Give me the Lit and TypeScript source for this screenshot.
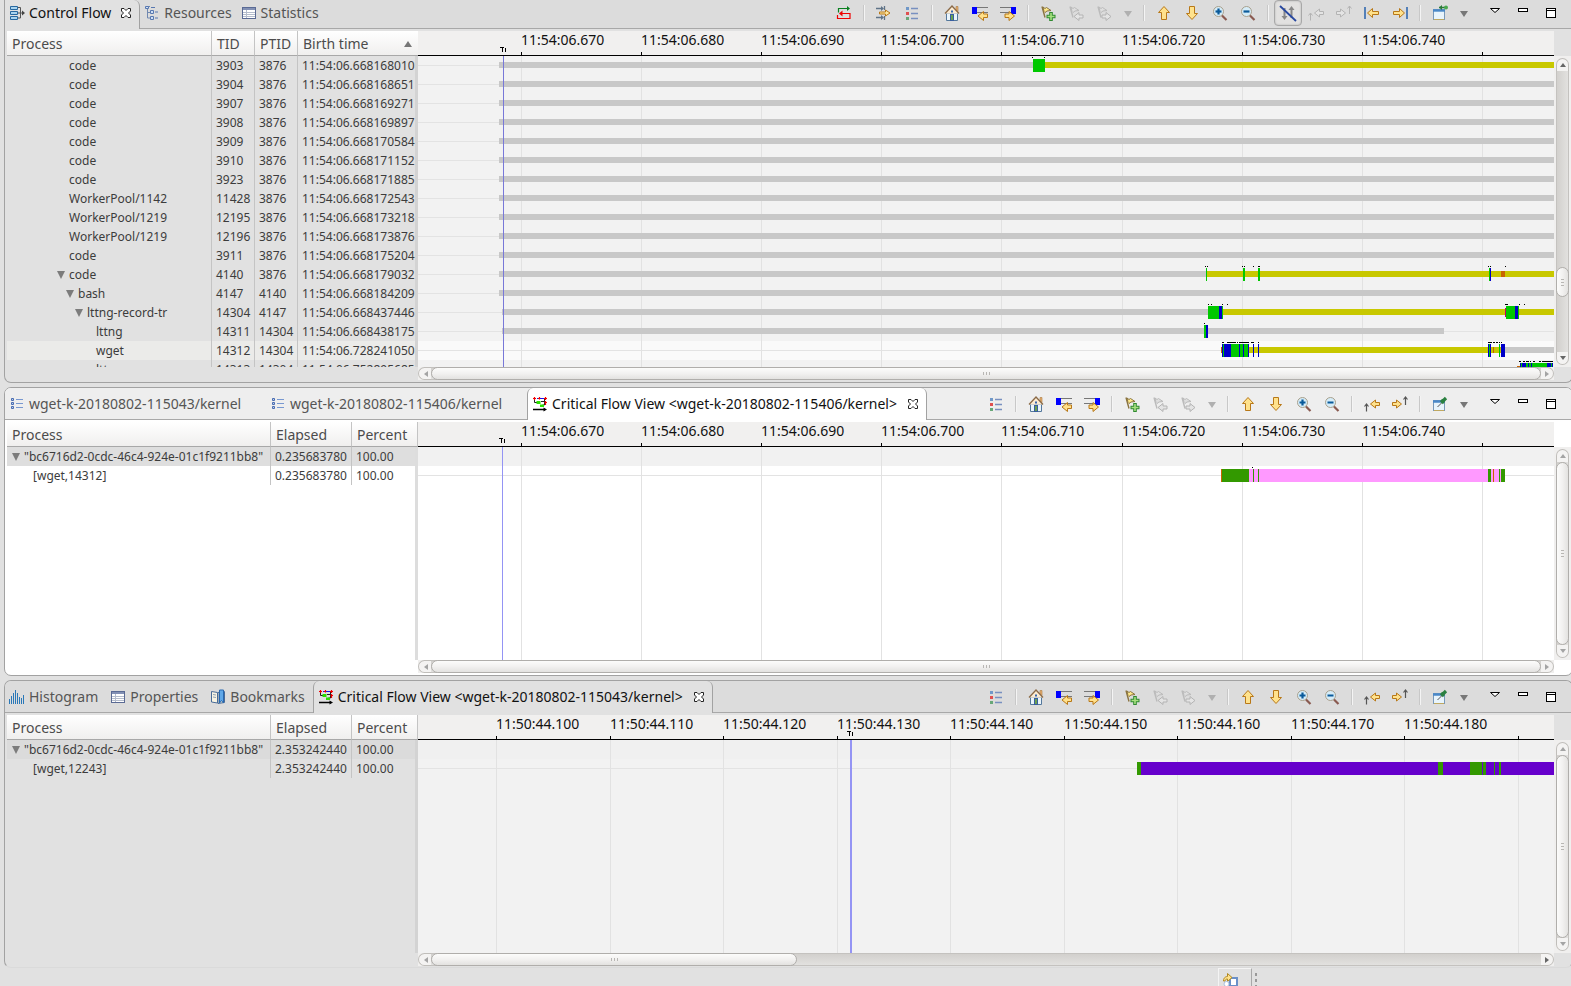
import { LitElement, html, css, svg, nothing, TemplateResult, SVGTemplateResult } from "lit";
import { customElement } from "lit/decorators.js";
import { classMap } from "lit/directives/class-map.js";

type Seg = [number, number, string];
interface Row { level: number; open?: boolean; cells: string[]; selected?: boolean; segs?: Seg[]; dots?: [number, number][] }
interface Tab { icon: string; label: string; active?: boolean; size: string }
interface View {
  name: string; tone: string; tabs: Tab[]; tools: string[]; columns: string[]; sorted?: boolean;
  rows: Row[]; ticks: [number, string][]; cursor: number; thumb: [number, number]; vthumb: [number, number];
}

/* Visible range shared by every time axis. */
const START = 418;
const END = 1554;
const pct = (v: number) => `${((v - START) / (END - START)) * 100}%`;
const wid = (a: number, b: number) => `${((b - a) / (END - START)) * 100}%`;

const arrowR = (c: string, f: string) => svg`<path d="M1.5 6.5h6v-3l5 4.5-5 4.500v-3h-6z" fill=${f} stroke=${c}/>`;
const arrowL = (c: string, f: string) => svg`<path d="M14.500 6.500h-6v-3l-5 4.500 5 4.500v-3h6z" fill=${f} stroke=${c}/>`;
const lens = svg`<path d="M10 10.500l4.500 4.500" stroke="#8a5a50" stroke-width="2.200"/><circle cx="6.500" cy="6.500" r="5" fill="#d5ecf8" stroke="#a9a08c"/><path d="M3.500 6.500h6" stroke="#0a5a9a" stroke-width="2.200"/>`;
const flag = (c: string, f: string) => svg`<path d="M2 1.500l3 11" stroke=${c} stroke-width="1.400"/><path d="M3 2l2 1.500 1.500-1 4.500 3-4 .5-2 1.500-1-1z" fill=${f} stroke=${c}/>`;
const critical = svg`<path d="M5 2.500h8" stroke="#1414f0" stroke-width="1.200"/><path d="M2.500 4v2.500h3M9 5.500h4M12.500 3v6h-2" stroke="#222" fill="none"/><path d="M1 2.500h3M2.500 1v3M6 2.500h2M7.500 1v2.500M12 2.500h3M13.500 1v3M13.500 5v4M12.500 6.500h2.500" stroke="#f00000" stroke-width="1.200"/><path d="M4.500 5h4v3h-4zM8 8.500h4v2.500h-4z" fill="#2be000"/><path d="M1 13.500h12" stroke="#000" stroke-width="1.300"/><path d="M11.500 11.500l3.500 2-3.500 2z" fill="#000"/>`;
const grid = svg`<rect x="1.500" y="2.500" width="13" height="11" fill="#fff" stroke="#5a6a94"/><path d="M2 4h12" stroke="#8290b4" stroke-width="2"/><path d="M2 7.500h12M2 9.500h12M2 11.500h12M5.500 5v8" stroke="#b4bccc"/>`;
const house = svg`<path d="M12 1.500h2v5h-2z" fill="#e8b070" stroke="#a87840" stroke-width=".6"/><path d="M2.500 8h11v7.500h-11z" fill="#eaf4fb" stroke="#54789c"/><path d="M1 8.500L8 1l7 7.500" fill="#fbead0" stroke="#8a6a48" stroke-width="1.300"/><rect x="6.500" y="9.500" width="3" height="6" fill="#6aa050" stroke="#385ea0"/><path d="M7 6.500h2" stroke="#3868b0" stroke-width="2"/>`;
const pinWin = svg`<rect x="1.500" y="4.500" width="11" height="10" fill="#e8f4fc" stroke="#7898b8"/><path d="M1 5.500h12" stroke="#4a88c8" stroke-width="2.400"/><path d="M2 14.500h10" stroke="#c0a860"/>`;

const ICONS: Record<string, SVGTemplateResult> = {
  flow: svg`<path d="M1.500 1.500h7v3h-7zM1.500 6.500h7v3h-7zM1.500 11.500h7v3h-7z" fill="#a8d4f0" stroke="#2868a0"/><path d="M9 2.500h2.500v10.500h-2.500M9 8h5" stroke="#555" fill="none"/><path d="M13 5.500l3 2.500-3 2.500z" fill="#444"/>`,
  tree: svg`<path d="M2 1.500h4M3.500 2v11h3M3.500 7.500h3" stroke="#7088b0" fill="none"/><path d="M1.500 1.500h3v2h-3zM6.500 5.500h3v3h-3zM6.500 11.500h3v3h-3z" fill="#cfe0f4" stroke="#5878b0"/><path d="M7 2.500h4M11 7h3M11 13h3" stroke="#5878b0"/>`,
  grid,
  events: svg`<path d="M2.500 2.500h2v2h-2zM2.500 6.500h2v2h-2zM2.500 10.500h2v2h-2z" fill="#bcd0ec" stroke="#4a6cb0"/><path d="M7 3.500h7M7 7.500h7M7 11.500h7" stroke="#7898d0"/>`,
  critical,
  histogram: svg`<path d="M.5 15v-5M2.500 15v-8M4.500 15v-11M6.500 15v-14M8.500 15v-11M10.500 15v-7M12.500 15v-6M14.500 15v-9" stroke="#2a78b8" stroke-width="1"/>`,
  book: svg`<path d="M1.500 2.500l6 1v10.500l-6-1z" fill="#f8f4e4" stroke="#4a6c98"/><path d="M8 3.500l6.500-1v11l-6.500 1z" fill="#f0ecd8" stroke="#4a6c98"/><path d="M9.500 1h4v13l-2-2.500-2 2.500z" fill="#60a8e8" stroke="#2868b0"/><path d="M3 5.500l3 .5M3 8l3 .5" stroke="#90a0b0"/>`,
  link: svg`<path d="M2.500 7.500v-4h9" stroke="#0a8020" fill="none" stroke-width="1.200"/><path d="M11 1l3 2.500-3 2.500z" fill="#0a8020"/><path d="M5 8.500h9M14 8v5.500h-12.500v-3.500" stroke="#f00000" fill="none" stroke-width="1.200"/><path d="M6.500 5.500v6l-3.500-3z" fill="#f00000"/>`,
  align: svg`<path d="M0 3.500h6M0 12.500h6M8.500 1v4M8.500 11v4" stroke="#607488" stroke-width="1.300"/><path d="M5 1l3 2.500L5 6zM5 10l3 2.500L5 15z" fill="#607488"/><path d="M3.500 7h6v-2l4.500 3-4.500 3v-2h-6z" fill="#ffe9a0" stroke="#b87818"/>`,
  legend: svg`<rect x="2" y="2" width="3" height="3" fill="#7098c8"/><rect x="2" y="7" width="3" height="3" fill="#e05050"/><rect x="2" y="12" width="3" height="3" fill="#68a878"/><path d="M7 3.500h7M7 8.500h7M7 13.500h7" stroke="#7890c0" stroke-width="1.300"/>`,
  home: house,
  prev: svg`<path d="M4 2.500h12M4 7.500h12" stroke="#777"/><rect x="0" y="2" width="5" height="7" fill="#00f"/><path d="M15.500 9h-4v-2.500l-5.500 4.500 5.500 4.500v-3h4z" fill="#ffe08a" stroke="#b87818"/>`,
  next: svg`<path d="M0 2.500h12M0 7.500h12" stroke="#777"/><rect x="11" y="2" width="5" height="7" fill="#00f"/><path d="M5 9h4v-2.500l5.500 4.500-5.500 4.500v-3h-4z" fill="#ffe08a" stroke="#b87818"/>`,
  flagadd: svg`${flag("#8a7440", "#ffe98a")}<path d="M11 7v9M6.500 11.500h9" stroke="#2f8a30" stroke-width="3.600"/><path d="M11 8v7M7.500 11.500h7" stroke="#a8e080" stroke-width="1.600"/>`,
  flagprev: svg`${flag("#bbb", "#dedede")}<path d="M15 10h-4v-2.500l-5 4 5 4v-2.500h4z" fill="#e4e4e4" stroke="#b4b4b4"/>`,
  flagnext: svg`${flag("#bbb", "#dedede")}<path d="M6 10h4v-2.500l5 4-5 4v-2.500h-4z" fill="#e4e4e4" stroke="#b4b4b4"/>`,
  up: svg`<path d="M8 1.500l5.500 6h-3v7h-5v-7h-3z" fill="#ffe28c" stroke="#b87818"/>`,
  down: svg`<path d="M8 14.500l5.500-6h-3v-7h-5v7h-3z" fill="#ffe28c" stroke="#b87818"/>`,
  zoomin: svg`${lens}<path d="M6.500 3.500v6" stroke="#0a5a9a" stroke-width="2.200"/>`,
  zoomout: lens,
  hide: svg`<path d="M4.500 3v10M11.500 3v10" stroke="#888" stroke-width="2"/><path d="M1.500 11h6l-3 4zM8.500 5h6l-3-4z" fill="#888"/><path d="M0 1l16 15" stroke="#2848a0" stroke-width="1.800"/>`,
  backoff: svg`<path d="M2.500 15.500v-7M0.500 10.500l2-2.500 2 2.500" stroke="#b4b4b4" fill="none"/><path d="M15.500 6.500h-4v-2.500l-5 4 5 4v-2.500h4z" fill="#e4e4e4" stroke="#b4b4b4"/>`,
  fwdoff: svg`<path d="M13.500 9V1M11.500 3.500l2-2.500 2 2.500" stroke="#b4b4b4" fill="none"/><path d="M.5 6.500h4v-2.500l5 4-5 4v-2.500h-4z" fill="#e4e4e4" stroke="#b4b4b4"/>`,
  back: svg`<path d="M2.500 15.500v-7M0.500 10.500l2-2.500 2 2.500" stroke="#555" stroke-width="1.200" fill="none"/><path d="M15.500 6.500h-4v-2.500l-5 4 5 4v-2.500h4z" fill="#ffe28c" stroke="#b87818"/>`,
  fwd: svg`<path d="M13.500 9V1M11.500 3.500l2-2.500 2 2.500" stroke="#555" stroke-width="1.200" fill="none"/><path d="M.5 6.500h4v-2.500l5 4-5 4v-2.500h-4z" fill="#ffe28c" stroke="#b87818"/>`,
  first: svg`<path d="M1 2v12" stroke="#5480b8" stroke-width="2"/>${arrowL("#b87818", "#ffe28c")}`,
  last: svg`<path d="M15 2v12" stroke="#5480b8" stroke-width="2"/>${arrowR("#b87818", "#ffe28c")}`,
  newview: svg`${pinWin}<path d="M7 2.500h8" stroke="#2a7a38" stroke-width="1.500"/><circle cx="14" cy="2.500" r="2" fill="#4aa850"/><path d="M10 0v5l-3-2.500z" fill="#2a7a38"/>`,
  pin: svg`${pinWin}<path d="M5.500 11l5-5" stroke="#555"/><path d="M9 4l3 3M10 6l4-4" stroke="#2a8040" stroke-width="3.200"/>`,
  dropoff: svg`<path d="M4 6h8l-4 6z" fill="#b0b0b0"/>`,
  drop: svg`<path d="M4 6h8l-4 6z" fill="#777"/>`,
  menu: svg`<path d="M3.500 3.500h9l-4.500 4z" fill="#fff" stroke="#000"/>`,
  min: svg`<rect x="3.500" y="3.500" width="9" height="3" fill="#fff" stroke="#000"/>`,
  max: svg`<rect x="3.500" y="3.500" width="9" height="9" fill="#fff" stroke="#000"/><path d="M3 5.500h10" stroke="#000"/>`,
  close: svg`<path d="M3.500 3.500h2.500l2 2 2-2h2.500v2.500l-2 2 2 2v2.500h-2.500l-2-2-2 2h-2.500v-2.500l2-2-2-2z" fill="#fff" stroke="#222"/>`,
  restore: svg`<rect x="8" y="5" width="7" height="8" fill="#fff" stroke="#6a90c8" stroke-width="2"/><path d="M1.500 8c0-4 3-4.500 4-4.500V.5l4.500 4-4.500 4V6c-2 0-2 1-2.500 2z" fill="#ffe28c" stroke="#b08820"/><circle cx="4.500" cy="11" r="2.500" fill="#fff" stroke="#a8c0e0"/>`,
};
const LABELS: Record<string, string> = {
  link: "Optimize", align: "Align views", legend: "Show legend", home: "Reset time scale", prev: "Previous state change", next: "Next state change",
  flagadd: "Add bookmark", flagprev: "Previous marker", flagnext: "Next marker", up: "Previous process", down: "Next process", zoomin: "Zoom in",
  zoomout: "Zoom out", hide: "Hide arrows", backoff: "Follow CPU backward", fwdoff: "Follow CPU forward", back: "Follow arrow backward",
  fwd: "Follow arrow forward", first: "Previous event", last: "Next event", newview: "New view", pin: "Pin view", drop: "More", dropoff: "Marker options",
  menu: "View menu", min: "Minimize", max: "Maximize",
};
const icon = (n: string) => html`<svg class="icon i-${n}" viewBox="0 0 16 16" width="16" height="16" fill="none" aria-hidden="true">${ICONS[n]}</svg>`;

const idle = (tid: string, ptid: string, birth: string, name = "code"): Row =>
  ({ level: 5, cells: [name, tid, ptid, "11:54:06." + birth], segs: [[499, 1554, "wait"]] });

const critTools = ["legend", "|", "home", "prev", "next", "|", "flagadd", "flagprev", "flagnext", "dropoff", "|", "up", "down", "zoomin", "zoomout", "|", "back", "fwd", "|", "pin", "drop"];
const axis06: [number, string][] = [[521, "670"], [641, "680"], [761, "690"], [881, "700"], [1001, "710"], [1122, "720"], [1242, "730"], [1362, "740"], [1482, ""]]
  .map(([x, l]) => [x as number, l ? "11:54:06." + l : ""]);

const VIEWS: View[] = [
  {
    name: "Control Flow", tone: "top",
    tabs: [{ icon: "flow", label: "Control Flow", active: true, size: "fit" }, { icon: "tree", label: "Resources", size: "fit" }, { icon: "grid", label: "Statistics", size: "fit" }],
    tools: ["link", "|", "align", "legend", "|", "home", "prev", "next", "|", "flagadd", "flagprev", "flagnext", "dropoff", "|", "up", "down", "zoomin", "zoomout", "|", "hide", "backoff", "fwdoff", "first", "last", "|", "newview", "drop"],
    columns: ["Process", "TID", "PTID", "Birth time"], sorted: true,
    rows: [
      { level: 5, cells: ["code", "3903", "3876", "11:54:06.668168010"], segs: [[499, 1033, "wait"], [1033, 1045, "run"], [1045, 1554, "block"]], dots: [[1032, 1033], [1044, 1045]] },
      idle("3904", "3876", "668168651"), idle("3907", "3876", "668169271"), idle("3908", "3876", "668169897"), idle("3909", "3876", "668170584"),
      idle("3910", "3876", "668171152"), idle("3923", "3876", "668171885"), idle("11428", "3876", "668172543", "WorkerPool/1142"),
      idle("12195", "3876", "668173218", "WorkerPool/1219"), idle("12196", "3876", "668173876", "WorkerPool/1219"), idle("3911", "3876", "668175204"),
      {
        level: 5, open: true, cells: ["code", "4140", "3876", "11:54:06.668179032"],
        segs: [[499, 1206, "wait"], [1206, 1207, "run"], [1207, 1554, "block"], [1243, 1245, "run"], [1258, 1260, "run"], [1489, 1490, "run"], [1490, 1491, "sys"], [1501, 1505, "irq"]],
        dots: [[1205, 1206], [1207, 1208], [1242, 1243], [1244, 1245], [1253, 1254], [1258, 1260], [1488, 1489], [1490, 1491], [1505, 1506]],
      },
      { level: 6, open: true, cells: ["bash", "4147", "4140", "11:54:06.668184209"], segs: [[499, 1554, "wait"]] },
      {
        level: 7, open: true, cells: ["lttng-record-tr", "14304", "4147", "11:54:06.668437446"],
        segs: [[502, 1208, "wait"], [1208, 1219, "run"], [1219, 1222, "sys"], [1222, 1223, "run"], [1223, 1505, "block"], [1505, 1506, "soft"], [1506, 1515, "run"], [1515, 1518, "sys"], [1518, 1519, "run"], [1519, 1554, "block"]],
        dots: [[1208, 1209], [1211, 1212], [1222, 1223], [1227, 1228], [1505, 1508], [1519, 1520], [1524, 1525]],
      },
      { level: 8, cells: ["lttng", "14311", "14304", "11:54:06.668438175"], segs: [[502, 1204, "wait"], [1204, 1206, "run"], [1206, 1208, "sys"], [1208, 1444, "wait"]], dots: [[1204, 1205]] },
      {
        level: 8, selected: true, cells: ["wget", "14312", "14304", "11:54:06.728241050"],
        segs: [[1221, 1222, "irq"], [1222, 1231, "sys"], [1223, 1224, "run"], [1231, 1248, "run"], [1239, 1240, "sys"], [1243, 1244, "sys"], [1248, 1249, "sys"], [1249, 1488, "block"], [1253, 1254, "sys"], [1258, 1259, "sys"], [1488, 1491, "sys"], [1489, 1490, "run"], [1491, 1501, "block"], [1493, 1494, "irq"], [1499, 1500, "run"], [1501, 1505, "sys"], [1505, 1554, "wait"]],
        dots: [[1222, 1224], [1227, 1236], [1237, 1238], [1239, 1249], [1251, 1254], [1258, 1259], [1488, 1492], [1493, 1495], [1496, 1498], [1499, 1500], [1501, 1502]],
      },
      {
        level: 8, cells: ["lttng", "14313", "14304", "11:54:06.752895685"],
        segs: [[1517, 1520, "irq"], [1520, 1552, "run"], [1520, 1521, "sys"], [1522, 1526, "sys"], [1528, 1529, "sys"], [1531, 1532, "sys"], [1547, 1551, "sys"], [1552, 1553, "sys"]],
        dots: [[1519, 1521], [1523, 1525], [1526, 1529], [1530, 1531], [1533, 1535], [1539, 1541], [1542, 1553]],
      },
    ],
    ticks: axis06, cursor: 503, thumb: [0, 1], vthumb: [196, 30],
  },
  {
    name: "Critical Flow View 115406", tone: "mid",
    tabs: [{ icon: "events", label: "wget-k-20180802-115043/kernel", size: "wide" }, { icon: "events", label: "wget-k-20180802-115406/kernel", size: "wide" }, { icon: "critical", label: "Critical Flow View <wget-k-20180802-115406/kernel>", active: true, size: "long" }],
    tools: critTools, columns: ["Process", "Elapsed", "Percent"],
    rows: [
      { level: 0, open: true, selected: true, cells: ['"bc6716d2-0cdc-46c4-924e-01c1f9211bb8"', "0.235683780", "100.00"] },
      {
        level: 1, cells: ["[wget,14312]", "0.235683780", "100.00"],
        segs: [[1221, 1222, "late"], [1222, 1249, "cpu"], [1249, 1501, "net"], [1253, 1254, "cpu"], [1258, 1259, "cpu"], [1488, 1491, "cpu"], [1493, 1494, "late"], [1499, 1500, "cpu"], [1501, 1505, "cpu"]],
        dots: [[1252, 1253]],
      },
    ],
    ticks: axis06, cursor: 502, thumb: [0, 1], vthumb: [0, 0],
  },
  {
    name: "Critical Flow View 115043", tone: "low",
    tabs: [{ icon: "histogram", label: "Histogram", size: "fit" }, { icon: "grid", label: "Properties", size: "fit" }, { icon: "book", label: "Bookmarks", size: "fit" }, { icon: "critical", label: "Critical Flow View <wget-k-20180802-115043/kernel>", active: true, size: "long" }],
    tools: critTools, columns: ["Process", "Elapsed", "Percent"],
    rows: [
      { level: 0, open: true, selected: true, cells: ['"bc6716d2-0cdc-46c4-924e-01c1f9211bb8"', "2.353242440", "100.00"] },
      {
        level: 1, cells: ["[wget,12243]", "2.353242440", "100.00"],
        segs: [[1137, 1141, "cpu"], [1141, 1554, "disk"], [1438, 1443, "cpu"], [1470, 1482, "cpu"], [1483, 1486, "cpu"], [1494, 1495, "cpu"], [1499, 1501, "cpu"]],
      },
    ],
    ticks: [[496, "100"], [610, "110"], [723, "120"], [837, "130"], [950, "140"], [1064, "150"], [1177, "160"], [1291, "170"], [1404, "180"], [1518, ""]].map(([x, l]) => [x as number, l ? "11:50:44." + l : ""]),
    cursor: 850, thumb: [0, 0.33], vthumb: [0, 0],
  },
];

@customElement("app-root")
export class AppRoot extends LitElement {
  static styles = css`
    :host { display: flex; flex-direction: column; height: 100vh; min-height: 640px; overflow: hidden; background: #e1e1e1; color: #3c3c3c; font: 12px/19px "Noto Sans", "Open Sans", sans-serif; }
    * { box-sizing: border-box; }
    button { font: inherit; color: inherit; background: none; border: 0; padding: 0; margin: 0; }
    .icon { display: block; flex: none; overflow: visible; }
    .views { flex: 1; min-height: 0; display: grid; grid-template-rows: minmax(0, 383fr) minmax(0, 289fr) minmax(0, 288fr); gap: 4px; margin: 0 -2px 0 4px; }
    .view { display: flex; flex-direction: column; min-width: 0; border: 1px solid #a2a2a2; border-radius: 7px; background: var(--face); overflow: hidden; }
    .top { --face: #e1e1e1; --bar: #dcdcdc; --canvas: #f2f2f2; --pick: #ebebe9; --lanepick: #fafafa; --strip: #d3d3d3; border-top: 0; border-radius: 0 0 7px 7px; }
    .mid { --face: #ffffff; --bar: #eeeeee; --canvas: #ffffff; --pick: #dedede; --lanepick: #f1f1f1; --strip: #dddddd; }
    .low { --face: #e1e1e1; --bar: #dcdcdc; --canvas: #f2f2f2; --pick: #dbdbdb; --lanepick: #f0f0f0; --strip: #d3d3d3; border-bottom-color: #dadada; }
    .bar { flex: none; display: flex; height: 32px; background: var(--bar); padding-right: 7px; box-shadow: inset 0 -1px #a8a8a8; }
    .top .bar { height: 29px; }
    .tabs { display: flex; flex: 1; min-width: 0; }
    .tab { display: flex; align-items: center; gap: 4px; padding: 0 5px 0 4px; font-size: 14px; line-height: 20px; color: #555; white-space: nowrap; }
    .top .tab, .top .tools { padding-bottom: 3px; }
    .low .tab.fit { padding-right: 8px; }
    .tab.wide { width: 261px; }
    .tab.active { color: #111; background: var(--face); border: solid #a2a2a2; border-width: 0 1px; border-radius: 6px 6px 0 0; }
    .top .tab.active { border-left: 0; border-radius: 0 6px 0 0; }
    .tab.long { width: 400px; }
    .tab .i-close { margin-left: auto; }
    .fit .i-close { padding-left: 3px; width: 19px; }
    .tools { display: flex; align-items: center; flex: none; }
    .tool { width: 28px; height: 26px; display: flex; align-items: center; justify-content: center; flex: none; }
    .tool.drop { width: 20px; }
    .tool.on { border: 1px solid #a8a8a8; border-radius: 4px; background: #e2e1e0; box-shadow: inset 0 0 2px #aaa; }
    .sep { width: 12px; height: 16px; flex: none; display: flex; justify-content: center; }
    .sep::before { content: ""; width: 2px; background: linear-gradient(90deg, #c8c8c8 50%, #f4f4f4 50%); }
    .frame { margin-left: 7px; display: flex; }
    .body { flex: 1; min-height: 0; display: grid; grid-template-columns: 411px minmax(0, 1fr) 18px; grid-template-rows: minmax(0, 1fr) 13px; padding: 2px 0 2px 2px; }
    .low .body { padding-bottom: 1px; }
    .pane { position: relative; overflow: hidden; }
    .pane::after { content: ""; position: absolute; right: 0; top: 25px; bottom: 0; width: 3px; background: var(--strip); }
    table { width: 100%; border-collapse: separate; border-spacing: 0; table-layout: fixed; }
    th { height: 25px; padding: 1px 0 0 5px; text-align: left; font-weight: 400; font-size: 14px; line-height: 20px; color: #4c4c4c; background: linear-gradient(#fff, #f0efee); border-bottom: 1px solid #a8a8a8; white-space: nowrap; }
    .th { display: flex; justify-content: space-between; align-items: center; padding-right: 6px; }
    td { height: 19px; padding: 0 0 0 4px; overflow: hidden; white-space: nowrap; line-height: 18px; }
    td:first-child { padding-left: 5px; }
    th:not(:last-child), td:not(:last-child) { border-right: 1px solid #c4c4c4; }
    .c4 th:nth-child(1) { width: 205px; } .c4 th:nth-child(2), .c4 th:nth-child(3) { width: 43px; }
    .c3 th:nth-child(1) { width: 264px; } .c3 th:nth-child(2) { width: 81px; }
    .c3 th:last-child { border-right: 1px solid #c4c4c4; }
    .picked td { background: var(--pick); }
    .node { display: flex; align-items: center; }
    .l1 { padding-left: 9px; } .l5 { padding-left: 45px; } .l6 { padding-left: 54px; } .l7 { padding-left: 63px; } .l8 { padding-left: 72px; }
    .twist { width: 12px; height: 18px; display: flex; align-items: center; flex: none; }
    .chart { position: relative; overflow: hidden; display: flex; flex-direction: column; }
    .axis { position: relative; flex: none; height: 25px; background: #f1f0ef; border-bottom: 1px solid #000; }
    .tick { position: absolute; top: 0; bottom: 0; font-size: 14px; line-height: 18px; color: #111; }
    .tick::after { content: ""; position: absolute; left: 0; bottom: 0; width: 1px; height: 3px; background: #000; }
    .mark { position: absolute; bottom: -8px; width: 16px; height: 24px; margin-left: -8px; }
    .canvas { position: relative; isolation: isolate; flex: 1; min-height: 0; overflow: hidden; background: var(--canvas); }
    .lane { position: relative; height: 19px; }
    .lane.line::before { content: ""; position: absolute; left: 0; right: 0; top: 9px; height: 1px; background: #e3e3e3; }
    .lane.picked { background: var(--lanepick); }
    .rule { position: absolute; z-index: 1; top: 0; bottom: 0; width: 1px; background: #e2e2e2; }
    .cursor { position: absolute; z-index: 3; top: 0; bottom: 0; width: 1px; background: #9494f4; }
    .top .cursor { background: #7878d8; }
    .low .cursor { width: 2px; }
    .seg { position: absolute; z-index: 2; top: 3px; height: 13px; }
    .wait, .block, .irq { top: 6px; height: 6px; }
    .wait { background: #c8c8c8; } .block { background: #c8c800; } .irq { background: #c86400; }
    .run { background: #00c800; } .sys { background: #0000c8; } .soft { background: #c80064; top: 5px; height: 9px; }
    .cpu { background: #339900; } .net { background: #ff99ff; } .disk { background: #6600cc; } .late { background: #c86400; }
    .dot { position: absolute; z-index: 2; top: 1px; height: 1px; background: #000; }
    .side { padding: 25px 0 0; }
    .vbar { width: 17px; height: 100%; padding: 2px; display: flex; flex-direction: column; background: #f0efee; }
    .hbar { display: flex; grid-column: 2; height: 13px; background: #f0efee; }
    .track { flex: 1; position: relative; min-width: 0; min-height: 0; background: linear-gradient(#d2d0cd, #e2e1df); border: solid #c4c2bf; border-width: 1px 0; }
    .vbar .track { background: linear-gradient(90deg, #d2d0cd, #e2e1df); border-width: 0 1px; }
    .thumb { position: absolute; top: -1px; bottom: -1px; border: 1px solid #b0aeab; border-radius: 7px; background: linear-gradient(#fcfcfb, #f2f1f0 50%, #e3e2e0); display: flex; align-items: center; justify-content: center; gap: 2px; }
    .vbar .thumb { left: -1px; right: -1px; background: linear-gradient(90deg, #fcfcfb, #f2f1f0 50%, #e3e2e0); flex-direction: column; }
    .vbar .full { top: 0; bottom: 0; }
    .grip { width: 1px; height: 3px; background: #b8b6b3; }
    .vbar .grip { width: 3px; height: 1px; }
    .end { flex: none; width: 13px; height: 13px; display: flex; align-items: center; justify-content: center; border: 1px solid #c0beba; background: #f4f3f2; }
    .end.left { border-radius: 7px 0 0 7px; border-right: 0; } .end.right { border-radius: 0 7px 7px 0; border-left: 0; }
    .end.upper { border-radius: 7px 7px 0 0; border-bottom: 0; } .end.lower { border-radius: 0 0 7px 7px; border-top: 0; }
    .status { flex: none; height: 18px; display: flex; justify-content: flex-end; padding-right: 314px; gap: 3px; overflow: hidden; }
    .fastview { width: 34px; height: 24px; padding: 4px 3px; flex: none; border: solid #f4f4f4; border-width: 1px 0 0 1px; border-right: 1px solid #a8a8a8; }
    .dots { width: 2px; margin-top: 5px; background: repeating-linear-gradient(#999 0 3px, transparent 3px 6px); }
  `;

  private end(side: string, on = false) {
    const d: Record<string, string> = { left: "M6 0v6L2 3z", right: "M1 0v6l4-3z", upper: "M0 5h6L3 1z", lower: "M0 1h6L3 5z" };
    return html`<button class="end ${side}" aria-label="Scroll ${side}"><svg width="6" height="6" viewBox="0 0 6 6" aria-hidden="true"><path d=${d[side]} fill=${on ? "#666" : "#a4a4a4"} /></svg></button>`;
  }

  private grips() { return [0, 1, 2].map(() => html`<span class="grip"></span>`); }

  private tool(n: string): TemplateResult {
    if (n === "|") return html`<span class="sep"></span>`;
    return html`<button class=${classMap({ tool: true, on: n === "hide", drop: n.startsWith("drop") })} aria-label=${LABELS[n]} ?disabled=${n.endsWith("off")}>${icon(n)}</button>`;
  }

  private row(r: Row) {
    return html`<tr class=${r.selected ? "picked" : ""}>${r.cells.map((c, i) => i ? html`<td>${c}</td>` : html`<td><div class="node l${r.level}">
      ${r.open ? html`<button class="twist" aria-label="Collapse ${c}"><svg width="8" height="8" viewBox="0 0 8 8" aria-hidden="true"><path d="M0 0h8L4 8z" fill="#7c7c7c"/></svg></button>` : html`<span class="twist"></span>`}<span>${c}</span></div></td>`)}</tr>`;
  }

  private lane(r: Row) {
    return html`<div class=${classMap({ lane: true, picked: !!r.selected, line: !!r.segs })}>
      ${(r.segs ?? []).map(([a, b, k]) => html`<span class="seg ${k}" style="left:${pct(a)};width:${wid(a, b)}"></span>`)}
      ${(r.dots ?? []).map(([a, b]) => html`<span class="dot" style="left:${pct(a)};width:${wid(a, b)}"></span>`)}
    </div>`;
  }

  private view(v: View) {
    const [vt, vh] = v.vthumb;
    return html`<section class="view ${v.tone}" aria-label=${v.name}>
      <header class="bar">
        <div class="tabs" role="tablist">${v.tabs.map(t => html`<button role="tab" aria-selected=${t.active ? "true" : "false"} class="tab ${t.size} ${t.active ? "active" : ""}">${icon(t.icon)}<span>${t.label}</span>${t.active ? icon("close") : nothing}</button>`)}</div>
        <div class="tools">${v.tools.map(n => this.tool(n))}<div class="frame">${["menu", "min", "max"].map(n => this.tool(n))}</div></div>
      </header>
      <div class="body">
        <div class="pane"><table class="c${v.columns.length}">
          <thead><tr>${v.columns.map((c, i) => html`<th scope="col"><div class="th">${c}${v.sorted && i === 3 ? html`<svg width="8" height="6" viewBox="0 0 8 6" aria-hidden="true"><path d="M0 6h8L4 0z" fill="#777"/></svg>` : nothing}</div></th>`)}</tr></thead>
          <tbody>${v.rows.map(r => this.row(r))}</tbody>
        </table></div>
        <div class="chart">
          <div class="axis">
            ${v.ticks.map(([x, l]) => html`<span class="tick" style="left:${pct(x)}">${l}</span>`)}
            <svg class="mark" style="left:${pct(v.cursor)}" viewBox="0 0 16 24" aria-hidden="true"><path d="M5 8.500h4M7.500 9v4M10.500 9v4" stroke="#000" fill="none"/></svg>
          </div>
          <div class="canvas">
            ${v.rows.map(r => this.lane(r))}
            ${v.ticks.map(([x]) => html`<span class="rule" style="left:${pct(x)}"></span>`)}
            <span class="cursor" style="left:${pct(v.cursor)}"></span>
          </div>
        </div>
        <div class="side"><div class="vbar">${this.end("upper", !!vh)}<div class="track">${vh
          ? html`<div class="thumb" style="top:${(vt / 281) * 100}%;height:${vh}px">${this.grips()}</div>`
          : html`<div class="thumb full">${this.grips()}</div>`}</div>${this.end("lower", !!vh)}</div></div>
        <div class="hbar">${this.end("left")}<div class="track"><div class="thumb" style="left:${v.thumb[0] * 100}%;width:${v.thumb[1] * 100}%">${this.grips()}</div></div>${this.end("right", v.thumb[1] < 1)}</div>
      </div>
    </section>`;
  }

  render() {
    return html`<main class="views">${VIEWS.map(v => this.view(v))}</main>
      <footer class="status"><button class="fastview" aria-label="Restore">${icon("restore")}</button><span class="dots"></span></footer>`;
  }
}
